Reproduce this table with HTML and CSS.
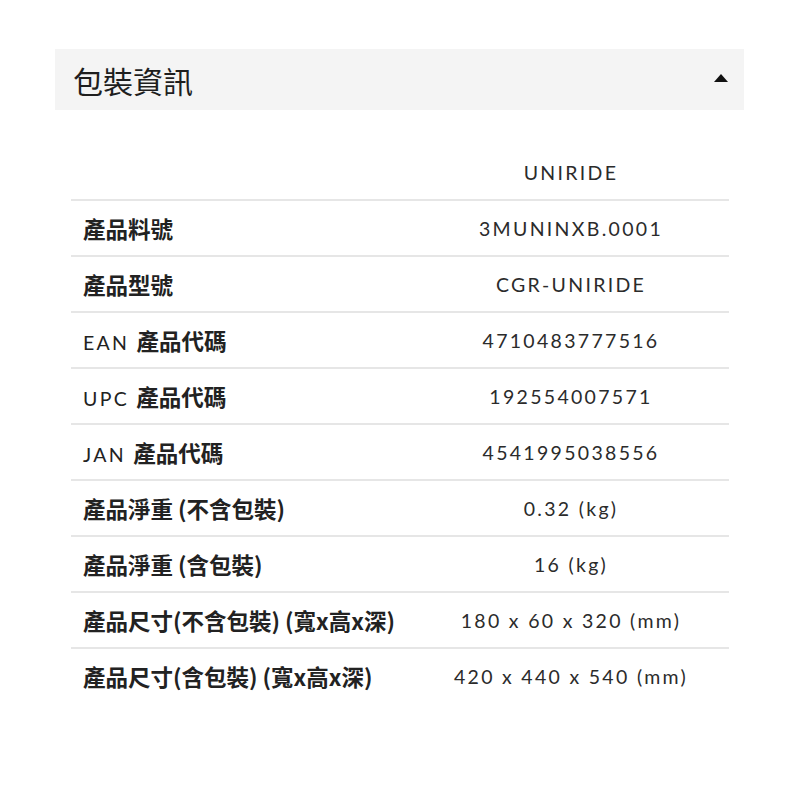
FILE: index.html
```html
<!DOCTYPE html>
<html lang="zh-Hant">
<head>
  <meta charset="UTF-8" />
  <title>包裝資訊</title>
  <link rel="stylesheet" href="styles.css">
</head>

<body>

  <div class="panel">
    <div class="panel-head">
      <h2>包裝資訊</h2>
      <span class="caret"></span>
    </div>

    <table class="spec">
      <thead>
        <tr>
          <th></th>
          <th class="val">UNIRIDE</th>
        </tr>
      </thead>
      <tbody>
        <tr>
          <td><strong>產品料號</strong></td>
          <td class="val">3MUNINXB.0001</td>
        </tr>
        <tr>
          <td><strong>產品型號</strong></td>
          <td class="val">CGR-UNIRIDE</td>
        </tr>
        <tr>
          <td>EAN <strong>產品代碼</strong></td>
          <td class="val">4710483777516</td>
        </tr>
        <tr>
          <td>UPC <strong>產品代碼</strong></td>
          <td class="val">192554007571</td>
        </tr>
        <tr>
          <td>JAN <strong>產品代碼</strong></td>
          <td class="val">4541995038556</td>
        </tr>
        <tr>
          <td><strong>產品淨重 (不含包裝)</strong></td>
          <td class="val">0.32 (kg)</td>
        </tr>
        <tr>
          <td><strong>產品淨重 (含包裝)</strong></td>
          <td class="val">16 (kg)</td>
        </tr>
        <tr>
          <td><strong>產品尺寸(不含包裝) (寬x高x深)</strong></td>
          <td class="val">180 x 60 x 320 (mm)</td>
        </tr>
        <tr>
          <td><strong>產品尺寸(含包裝) (寬x高x深)</strong></td>
          <td class="val">420 x 440 x 540 (mm)</td>
        </tr>
      </tbody>
    </table>
  </div>

</body>
</html>
```

FILE: styles.css
```css
body {
  margin: 0;
  background: #fff;
  font-family: Lato, "Noto Sans CJK TC", sans-serif;
  color: #222;
}

.panel {
  width: 689px;
  margin: 49px 0 0 55px;
}

.panel-head {
  display: flex;
  align-items: center;
  justify-content: space-between;
  height: 61px;
  padding: 0 16px 0 18px;
  background: #f4f4f4;
}

.panel-head h2 {
  margin: 0;
  font-family: "Noto Sans CJK TC", sans-serif;
  font-size: 30px;
  font-weight: 400;
  color: #1e1e1e;
}

.caret {
  width: 0;
  height: 0;
  border-left: 7px solid transparent;
  border-right: 7px solid transparent;
  border-bottom: 8px solid #111;
  margin-top: -4px;
}

.spec {
  width: 658px;
  margin: 35px 0 0 16px;
  border-collapse: collapse;
}

.spec th,
.spec td {
  height: 54px;
  padding: 0 0 0 12px;
  text-align: left;
  font-size: 19.5px;
  font-weight: 400;
  letter-spacing: 2.3px;
  color: #222;
  border-bottom: 2px solid #e6e6e6;
}

.spec th:first-child,
.spec td:first-child {
  width: 327px;
}

.spec tbody tr:last-child td {
  border-bottom: none;
}

.spec strong {
  font-family: "Noto Sans CJK TC", sans-serif;
  font-size: 22.5px;
  font-weight: 700;
  letter-spacing: 0;
}

.spec .val {
  padding: 0 0 0 3px;
  text-align: center;
  color: #2b2b2b;
}
```
